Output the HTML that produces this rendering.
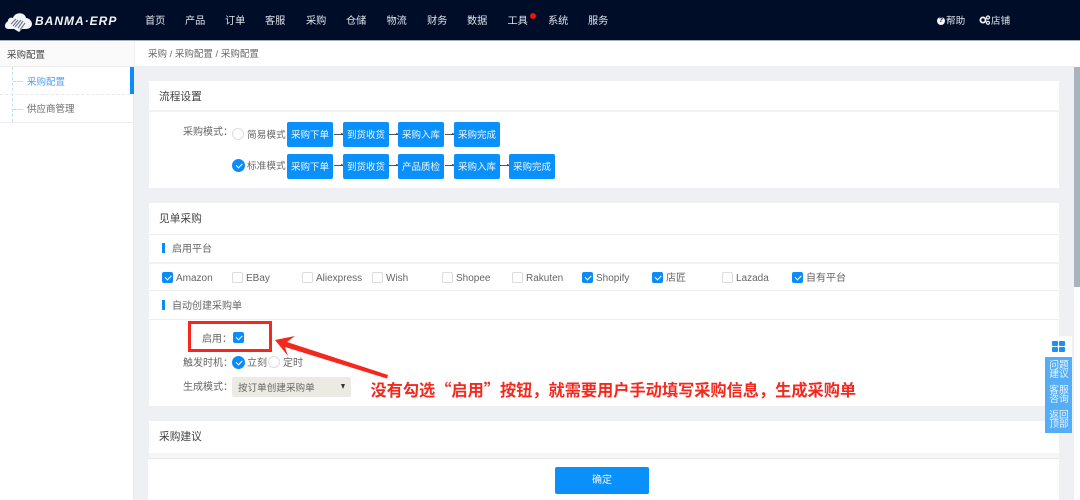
<!DOCTYPE html>
<html lang="zh">
<head>
<meta charset="utf-8">
<style>
html,body{margin:0;padding:0}
body{width:1080px;height:500px;overflow:hidden;position:relative;background:#eff0f4;font-family:"Liberation Sans","Noto Sans CJK SC",sans-serif;font-size:10px;color:#555}
div,span,svg{position:absolute;box-sizing:border-box}
.t{white-space:nowrap;line-height:14px;margin-top:4px}
.nav{top:14px;color:#dfe3ea;font-size:10.2px;line-height:15px;white-space:nowrap}
.card{background:#fff;left:149px;width:910px}
.ln{background:#eeeeee;height:1px;left:149px;width:910px}
.b{background:#0a90fb;color:#eef7ff;border-radius:2px;width:46px;text-align:center;font-size:9.5px;white-space:nowrap}
.r1{top:122px;height:25px;line-height:27px}
.r2{top:154px;height:25px;line-height:27px}
.a{height:1px;width:9px;background:#555;}
.a:after{content:"";position:absolute;right:-1px;top:-1px;border-left:3px solid #444;border-top:1.5px solid transparent;border-bottom:1.5px solid transparent}
.cb{width:11px;height:11px;border:1px solid #dcdcdc;border-radius:2px;background:#fff;top:272px}
.cb.on{background:#0a8cfa;border-color:#0a8cfa}
.cb.on:after{content:"";box-sizing:border-box;position:absolute;left:1.5px;top:1.5px;width:6px;height:3.5px;border-left:1.7px solid #fff;border-bottom:1.7px solid #fff;transform:rotate(-45deg)}
.rd{width:12px;height:12px;border-radius:50%;border:1px solid #dcdcdc;background:#fff}
.rd.on{width:13px;height:13px;background:#0a8cfa;border-color:#0a8cfa}
.rd.on:after{content:"";box-sizing:border-box;position:absolute;left:2.5px;top:2.5px;width:6px;height:3.5px;border-left:1.7px solid #fff;border-bottom:1.7px solid #fff;transform:rotate(-45deg)}
.bar{width:3px;height:10px;background:#0a8cfa;left:162px}
.lab{font-size:10px;color:#666}
.ttl{color:#444;font-size:10.7px;margin-top:3px}
</style>
</head>
<body>
<!-- header -->
<div style="left:0;top:0;width:1080px;height:40px;background:#000d28"></div>
<div style="left:0;top:40px;width:1080px;height:1px;background:#a9b0b8"></div>
<svg style="left:4px;top:10px" width="29" height="22" viewBox="0 0 29 22">
<path d="M1 16c0-3 2-4 3-5 0-3 3-4 5-3 1-4 6-6 10-4 2 1 3 3 3 4 3 0 6 3 6 6 0 3-3 5-6 5h-4l-3 3-5-3H5c-2 0-4-1-4-3z" fill="#f2f4f7"/>
<path d="M9 16l5-6M11 17l6-7M14 18l5-7M16 20l5-7M7 14l5-5" stroke="#6d7686" stroke-width="1.1" fill="none"/>
</svg>
<div class="t" style="left:35px;top:10px;color:#f2f4f7;font-size:12px;font-weight:bold;font-style:italic;letter-spacing:1px;line-height:15px">BANMA·ERP</div>
<div class="nav" style="left:145px">首页</div>
<div class="nav" style="left:185px">产品</div>
<div class="nav" style="left:225px">订单</div>
<div class="nav" style="left:265px">客服</div>
<div class="nav" style="left:306px">采购</div>
<div class="nav" style="left:346px">仓储</div>
<div class="nav" style="left:386.5px">物流</div>
<div class="nav" style="left:427px">财务</div>
<div class="nav" style="left:467px">数据</div>
<div class="nav" style="left:507.5px">工具</div>
<div style="left:530px;top:13px;width:6px;height:6px;border-radius:50%;background:#f01010"></div>
<div class="nav" style="left:548px">系统</div>
<div class="nav" style="left:588px">服务</div>
<div style="left:937px;top:17px;width:8px;height:8px;border-radius:50%;background:#f2f4f7;color:#000d28;font-size:7px;line-height:8px;text-align:center;font-weight:bold">?</div>
<div class="nav" style="left:946px;top:14px;font-size:9.6px">帮助</div>
<svg style="left:979px;top:15px" width="12" height="10" viewBox="0 0 12 10"><circle cx="4" cy="5" r="2.6" fill="none" stroke="#f2f4f7" stroke-width="1.8"/><circle cx="9" cy="2.5" r="1.5" fill="none" stroke="#f2f4f7" stroke-width="1.2"/><circle cx="9" cy="7.8" r="1.5" fill="none" stroke="#f2f4f7" stroke-width="1.2"/></svg>
<div class="nav" style="left:991px;top:14px;font-size:9.6px">店铺</div>

<!-- sidebar -->
<div style="left:0;top:41px;width:134px;height:459px;background:#fff;border-right:1px solid #e8e9ed"></div>
<div style="left:0;top:41px;width:134px;height:26px;background:#fafafa;border-bottom:1px solid #ececec"></div>
<div class="t" style="left:7px;top:45px;color:#444;font-size:9.5px">采购配置</div>
<div style="left:12px;top:67px;height:55px;width:0;border-left:1px dashed #bfdcf0"></div>
<div style="left:13px;top:81px;width:10px;height:0;border-top:1px dashed #bfdcf0"></div>
<div style="left:13px;top:109px;width:10px;height:0;border-top:1px dashed #bfdcf0"></div>
<div style="left:0;top:94px;width:130px;height:0;border-top:1px dashed #e8e8e8"></div>
<div style="left:0;top:122px;width:134px;height:1px;background:#eee"></div>
<div style="left:130px;top:67px;width:4px;height:27px;background:#0a8cfa"></div>
<div class="t" style="left:27px;top:72px;color:#4a9efa;font-size:9.5px">采购配置</div>
<div class="t" style="left:27px;top:99px;color:#666;font-size:9.5px">供应商管理</div>

<!-- breadcrumb -->
<div style="left:135px;top:41px;width:945px;height:25px;background:#fff"></div>
<div class="t" style="left:148px;top:44px;color:#666;font-size:9.5px">采购 / 采购配置 / 采购配置</div>

<!-- scrollbar -->
<div style="left:1074px;top:66px;width:6px;height:434px;background:#fff"></div>
<div style="left:1074px;top:67px;width:6px;height:220px;background:#a8b3bd"></div>

<!-- card 1 -->
<div class="card" style="top:81px;height:107px"></div>
<div class="ln" style="top:110px;height:2px;background:#f1f1f3"></div>
<div class="t ttl" style="left:159px;top:87px">流程设置</div>
<div class="t lab" style="left:183px;top:122px">采购模式：</div>
<div class="rd" style="left:232px;top:128px"></div>
<div class="t lab" style="left:247px;top:125px;font-size:9.7px">简易模式</div>
<div class="b r1" style="left:287px">采购下单</div>
<div class="a" style="left:334px;top:134px"></div>
<div class="b r1" style="left:343px">到货收货</div>
<div class="a" style="left:389px;top:134px"></div>
<div class="b r1" style="left:398px">采购入库</div>
<div class="a" style="left:444.5px;top:134px"></div>
<div class="b r1" style="left:454px">采购完成</div>
<div class="rd on" style="left:232px;top:159px"></div>
<div class="t lab" style="left:247px;top:156px;font-size:9.7px">标准模式</div>
<div class="b r2" style="left:287px">采购下单</div>
<div class="a" style="left:334px;top:165px"></div>
<div class="b r2" style="left:343px">到货收货</div>
<div class="a" style="left:389px;top:165px"></div>
<div class="b r2" style="left:398px">产品质检</div>
<div class="a" style="left:444.5px;top:165px"></div>
<div class="b r2" style="left:454px">采购入库</div>
<div class="a" style="left:500px;top:165px"></div>
<div class="b r2" style="left:509px">采购完成</div>

<!-- card 2 -->
<div class="card" style="top:203px;height:203px"></div>
<div class="t ttl" style="left:159px;top:209px">见单采购</div>
<div class="ln" style="top:234px"></div>
<div class="bar" style="top:243px"></div>
<div class="t lab" style="left:172px;top:239px">启用平台</div>
<div class="ln" style="top:262px;height:2px;background:#f1f1f3"></div>
<div class="cb on" style="left:162px"></div><div class="t lab" style="left:176px;top:268px">Amazon</div>
<div class="cb" style="left:232px"></div><div class="t lab" style="left:246px;top:268px">EBay</div>
<div class="cb" style="left:302px"></div><div class="t lab" style="left:316px;top:268px">Aliexpress</div>
<div class="cb" style="left:372px"></div><div class="t lab" style="left:386px;top:268px">Wish</div>
<div class="cb" style="left:442px"></div><div class="t lab" style="left:456px;top:268px">Shopee</div>
<div class="cb" style="left:512px"></div><div class="t lab" style="left:526px;top:268px">Rakuten</div>
<div class="cb on" style="left:582px"></div><div class="t lab" style="left:596px;top:268px">Shopify</div>
<div class="cb on" style="left:652px"></div><div class="t lab" style="left:666px;top:268px">店匠</div>
<div class="cb" style="left:722px"></div><div class="t lab" style="left:736px;top:268px">Lazada</div>
<div class="cb on" style="left:792px"></div><div class="t lab" style="left:806px;top:268px">自有平台</div>
<div class="ln" style="top:290px"></div>
<div class="bar" style="top:300px"></div>
<div class="t lab" style="left:172px;top:296px">自动创建采购单</div>
<div class="ln" style="top:319px"></div>
<div class="t lab" style="left:202px;top:329px">启用：</div>
<div class="cb on" style="left:233px;top:332px"></div>
<div class="t lab" style="left:183px;top:353px">触发时机：</div>
<div class="rd on" style="left:232px;top:356px"></div>
<div class="t lab" style="left:247px;top:353px">立刻</div>
<div class="rd" style="left:268px;top:356px"></div>
<div class="t lab" style="left:283px;top:353px">定时</div>
<div class="t lab" style="left:183px;top:377px">生成模式：</div>
<div style="left:232px;top:377px;width:119px;height:20px;background:#ebebe4;border-radius:2px"></div>
<div class="t lab" style="left:238px;top:378px;font-size:9.6px">按订单创建采购单</div>
<div style="left:341px;top:384px;border-top:5px solid #333;border-left:2.5px solid transparent;border-right:2.5px solid transparent"></div>

<!-- card 3 -->
<div class="card" style="top:421px;height:32px"></div>
<div style="left:149px;top:453px;width:910px;height:5px;background:#f6f6f7"></div>
<div class="t ttl" style="left:159px;top:427px">采购建议</div>

<!-- footer -->
<div style="left:148px;top:458px;width:911px;height:42px;background:#fff;border-top:1px solid #e8e8ea"></div>
<div style="left:555px;top:467px;width:94px;height:27px;background:#0a90fb;border-radius:2px;color:#eef7ff;text-align:center;line-height:28px;font-size:10px">确定</div>

<!-- floating -->
<div style="left:1045px;top:336px;width:27px;height:21px;background:#fff"></div>
<div style="left:1052px;top:341px;width:5.5px;height:5px;background:#1e90f5;border-radius:1px"></div>
<div style="left:1059px;top:341px;width:5.5px;height:5px;background:#1e90f5;border-radius:1px"></div>
<div style="left:1052px;top:347px;width:5.5px;height:5px;background:#1e90f5;border-radius:1px"></div>
<div style="left:1059px;top:347px;width:5.5px;height:5px;background:#1e90f5;border-radius:1px"></div>
<div style="left:1045px;top:357px;width:27px;height:76px;background:#55aef5"></div>
<div style="left:1049px;top:361px;width:20px;color:#e8f4ff;font-size:9.8px;line-height:9px;text-align:center">问题<br>建议</div>
<div style="left:1049px;top:386px;width:20px;color:#e8f4ff;font-size:9.8px;line-height:9px;text-align:center">客服<br>咨询</div>
<div style="left:1049px;top:411px;width:20px;color:#e8f4ff;font-size:9.8px;line-height:9px;text-align:center">返回<br>顶部</div>

<!-- annotation -->
<div style="left:188px;top:321px;width:84px;height:31px;border:3px solid #f5281e"></div>
<svg style="left:270px;top:330px" width="125" height="52" viewBox="0 0 125 52">
<path d="M5 10L25 6L17 12L118 45L117 48.5L15 17L18 26Z" fill="#f5281e"/>
</svg>
<div class="t" style="left:370.5px;top:375px;color:#f5281e;font-family:'Noto Sans CJK SC',sans-serif;font-size:16.2px;font-weight:bold;line-height:20px">没有勾选“启用”按钮，就需要用户手动填写采购信息，生成采购单</div>
</body>
</html>
